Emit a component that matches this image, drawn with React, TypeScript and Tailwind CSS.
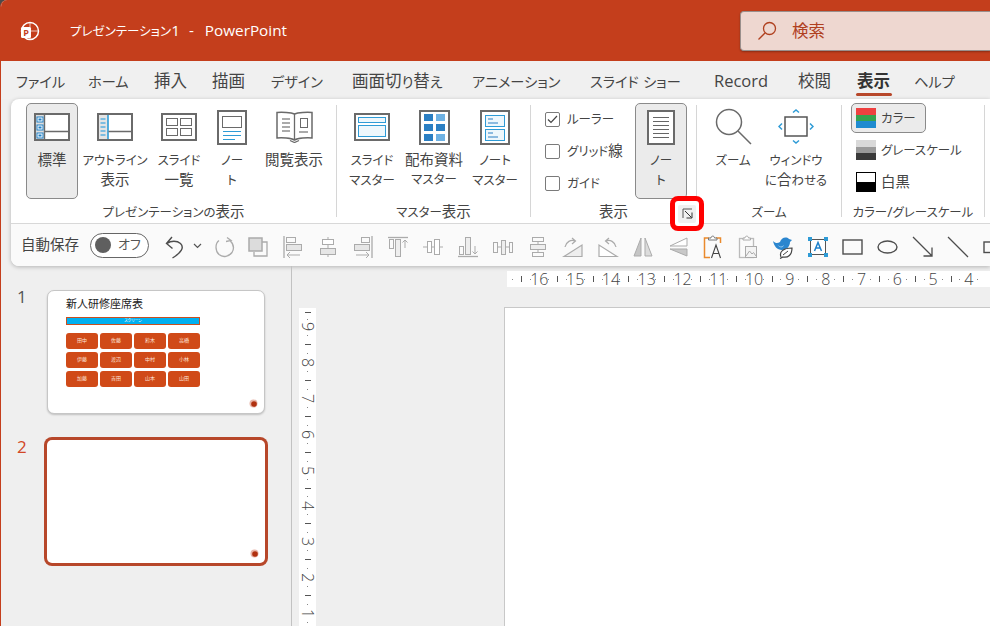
import React from "react";

const G = "#ababab";
const D = "#6a6a6a";
const B = "#2e9bd6";

function T({ s }: { s: string }) {
  const parts = s.split(/([\u3040-\u30FF]+)/);
  return (
    <>
      {parts.map((p, i) =>
        i % 2 === 1 ? (
          <span key={i} className="text-[0.86em]">{p}</span>
        ) : (
          <React.Fragment key={i}>{p}</React.Fragment>
        )
      )}
    </>
  );
}

function S({ w, h, children }: { w: number; h: number; children: React.ReactNode }) {
  return (
    <svg width={w} height={h} viewBox={`0 0 ${w} ${h}`} fill="none" className="block shrink-0">
      {children}
    </svg>
  );
}

const IconNormal = () => (
  <S w={36} h={28}>
    <rect x="1" y="1" width="34" height="26" fill="#fff" stroke={D} strokeWidth="2" />
    <rect x="2" y="2" width="8" height="24" fill="#dedede" />
    <path d="M10.5 1v26M10.5 18.5H35" stroke={D} strokeWidth="1.4" />
    {[4, 12, 20].map((y) => (
      <g key={y}>
        <rect x="3" y={y} width="6" height="5" fill="#fff" stroke="#1f7fc4" />
        <rect x="4.5" y={y + 1.5} width="3" height="2" fill="#1f7fc4" />
      </g>
    ))}
  </S>
);
const IconOutline = () => (
  <S w={36} h={28}>
    <rect x="1" y="1" width="34" height="26" fill="#fff" stroke={D} strokeWidth="2" />
    <rect x="2" y="2" width="9" height="24" fill="#e4e4e4" />
    <path d="M11 2v24" stroke={B} strokeWidth="1.6" />
    <path d="M11.5 18.5H35" stroke={D} strokeWidth="1.3" />
    <path d="M3.5 6h5M3.5 10h5M3.5 14h5M3.5 18h5M3.5 22h5" stroke="#5aaede" strokeWidth="1.3" />
  </S>
);
const IconSorter = () => (
  <S w={36} h={28}>
    <rect x="1" y="1" width="34" height="26" fill="#fff" stroke={D} strokeWidth="2" />
    <rect x="5.5" y="5.5" width="11" height="7" stroke={D} />
    <rect x="19.5" y="5.5" width="11" height="7" stroke={D} />
    <rect x="5.5" y="15.5" width="11" height="7" stroke={D} />
    <rect x="19.5" y="15.5" width="11" height="7" stroke={D} />
  </S>
);
const IconNotes = () => (
  <S w={30} h={35}>
    <rect x="1" y="1" width="28" height="33" fill="#fff" stroke={D} strokeWidth="2" />
    <rect x="5.5" y="6.5" width="19" height="11" stroke={D} />
    <path d="M6 21.5h18M6 25.5h18M6 29.5h12" stroke={B} strokeWidth="1.2" />
  </S>
);
const IconRead = () => (
  <S w={37} h={32}>
    <path d="M18.5 3C15 1.5 6 1 1 1.5V27c5-.5 14 0 17.5 2C22 27 31 26.5 36 27V1.5C31 1 22 1.500 18.500 3Z" fill="#fff" stroke={D} strokeWidth="1.5" />
    <path d="M18.5 3v26M14 29.500l4.500 2 4.500-2" stroke={D} strokeWidth="1.3" />
    <path d="M6 8h8M6 12h8M6 16h8M6 20h8M23 21h9" stroke="#8e8e8e" strokeWidth="1.3" />
    <rect x="24.500" y="7.500" width="7" height="9" stroke={D} />
  </S>
);
const IconSlideMaster = () => (
  <S w={36} h={28}>
    <rect x="1" y="1" width="34" height="26" fill="#fff" stroke={D} strokeWidth="2" />
    <rect x="4.500" y="4.500" width="27" height="5" fill="#eef7fc" stroke={B} />
    <rect x="4.500" y="12.500" width="27" height="11" fill="#eef7fc" stroke={B} />
  </S>
);
const IconHandout = () => (
  <S w={31} h={35}>
    <rect x="1" y="1" width="29" height="33" fill="#fff" stroke={D} strokeWidth="2" />
    {[4, 14, 24].map((y) => (
      <g key={y}>
        <rect x="5" y={y} width="9" height="7" fill="#2b7fc3" />
        <rect x="17" y={y} width="9" height="7" fill={y === 14 ? "#2b7fc3" : "#6eb2e4"} />
      </g>
    ))}
  </S>
);
const IconNotesMaster = () => (
  <S w={30} h={35}>
    <rect x="1" y="1" width="28" height="33" fill="#fff" stroke={D} strokeWidth="2" />
    <rect x="5.500" y="5.500" width="19" height="11" fill="#eef7fc" stroke={B} />
    <rect x="5.500" y="19.500" width="19" height="11" fill="#eef7fc" stroke={B} />
    <path d="M8 9h5M8 13h10M8 23h5M8 27h10" stroke="#2b7fc3" strokeWidth="1" />
  </S>
);
const IconNote = () => (
  <S w={28} h={35}>
    <rect x="1" y="1" width="26" height="33" fill="#fff" stroke={D} strokeWidth="2" />
    <path d="M6 7.500h16M6 11.500h16M6 15.500h16M6 19.500h16M6 23.500h16M6 27.500h16" stroke="#666" strokeWidth="1" />
  </S>
);
const IconZoom = () => (
  <S w={38} h={38}>
    <circle cx="15" cy="14" r="12.500" fill="#fff" stroke={D} strokeWidth="1.500" />
    <path d="M24 23l13 13" stroke={D} strokeWidth="1.500" />
  </S>
);
const IconFit = () => (
  <S w={36} h={36}>
    <rect x="7" y="8" width="22" height="19" fill="#fff" stroke="#555" strokeWidth="1.500" />
    <path d="M15 3.500l3-2.500 3 2.500M15 31.500l3 2.500 3-2.500M4 14.500l-3 3 3 3M32 14.500l3 3-3 3" stroke={B} strokeWidth="1.500" />
  </S>
);
const Swatch = ({ c }: { c: string[] }) => (
  <div className="flex flex-col w-[20px] h-[20px] shrink-0">
    {c.map((x, i) => (
      <div key={i} className="flex-1" style={{ background: x }} />
    ))}
  </div>
);

const I = {
  back: (
    <S w={22} h={22}>
      <path d="M15 6h5v14H7v-4" stroke={G} strokeWidth="1.300" />
      <rect x="2" y="2" width="13" height="13" fill="#dcdcdc" stroke={G} strokeWidth="1.500" />
    </S>
  ),
  alignL: (
    <S w={22} h={24}>
      <path d="M2 1v22" stroke={G} strokeWidth="1.300" />
      <rect x="4.500" y="2.500" width="9" height="5" stroke={G} />
      <rect x="4.500" y="9.500" width="15" height="6" fill="#e6e6e6" stroke={G} />
      <path d="M18 20H5m3-3l-3 3 3 3" stroke={G} />
    </S>
  ),
  alignC: (
    <S w={18} h={20}>
      <path d="M9 0v20" stroke={G} />
      <rect x="3.500" y="2.500" width="11" height="5" fill="#fff" stroke={G} />
      <rect x="1.500" y="11.500" width="15" height="6" fill="#e6e6e6" stroke={G} />
    </S>
  ),
  alignR: (
    <S w={22} h={24}>
      <path d="M20 1v22" stroke={G} strokeWidth="1.300" />
      <rect x="9.500" y="2.500" width="8" height="5" stroke={G} />
      <rect x="2.500" y="9.500" width="15" height="6" fill="#e6e6e6" stroke={G} />
      <path d="M4 20h13m-3-3l3 3-3 3" stroke={G} />
    </S>
  ),
  alignT: (
    <S w={22} h={22}>
      <path d="M1 1.500h20" stroke={G} strokeWidth="1.300" />
      <rect x="2.500" y="3.500" width="4" height="9" stroke={G} />
      <rect x="8.500" y="3.500" width="5" height="17" fill="#eee" stroke={G} />
      <path d="M18 12V4m-2.500 2.500L18 4l2.500 2.500" stroke={G} />
    </S>
  ),
  alignM: (
    <S w={20} h={18}>
      <path d="M0 9h20" stroke={G} />
      <rect x="4.500" y="3.500" width="4" height="11" fill="#fff" stroke={G} />
      <rect x="11.500" y="1.500" width="5" height="15" fill="#fff" stroke={G} />
    </S>
  ),
  alignB: (
    <S w={22} h={22}>
      <path d="M1 20.500h20" stroke={G} strokeWidth="1.300" />
      <rect x="2.500" y="10.500" width="4" height="8" stroke={G} />
      <rect x="8.500" y="1.500" width="5" height="17" fill="#eee" stroke={G} />
      <path d="M18 10v8m-2.500-2.500L18 18l2.500-2.500" stroke={G} />
    </S>
  ),
  distH: (
    <S w={22} h={16}>
      <rect x="1.500" y="3.500" width="4" height="10" stroke={G} />
      <rect x="9.500" y="1.500" width="4" height="14" fill="#eee" stroke={G} />
      <rect x="17.500" y="3.500" width="3" height="10" stroke={G} />
      <path d="M6 8h3M14 8h3" stroke={G} />
    </S>
  ),
  distV: (
    <S w={18} h={22}>
      <rect x="3.500" y="1.500" width="11" height="4" stroke={G} />
      <rect x="1.500" y="8.500" width="15" height="5" fill="#eee" stroke={G} />
      <rect x="3.500" y="16.500" width="11" height="4" stroke={G} />
      <path d="M9 6v2M9 14v2" stroke={G} />
    </S>
  ),
  rotR: (
    <S w={22} h={22}>
      <path d="M2 20.500h18V9L2 20.500Z" fill="#eee" stroke={G} strokeWidth="1.200" />
      <path d="M3 11c1-5 6-8 10-6m-3-3l3.500 3-3.500 3" stroke={G} strokeWidth="1.200" />
    </S>
  ),
  rotL: (
    <S w={22} h={22}>
      <path d="M2 20.500h18L2 9v11.500Z" fill="#fff" stroke={G} strokeWidth="1.200" />
      <path d="M19 11c-1-5-6-8-10-6m3-3L8.500 5 12 8" stroke={G} strokeWidth="1.200" />
    </S>
  ),
  flipH: (
    <S w={20} h={20}>
      <path d="M8 1v18H1L8 1Z" fill="#c5c5c5" stroke={G} />
      <path d="M12 1v18h7L12 1Z" fill="#dcdcdc" stroke={G} />
    </S>
  ),
  flipV: (
    <S w={20} h={20}>
      <path d="M19 1v8H2l17-8Z" fill="#fff" stroke={G} />
      <path d="M19 19v-7H2l17 7Z" fill="#c8c8c8" stroke={G} />
    </S>
  ),
  clipA: (
    <S w={20} h={24}>
      <path d="M6 3H1.500v19.500H7" stroke="#ea8a2d" strokeWidth="1.500" />
      <path d="M13 3h4.500v5" stroke="#ea8a2d" strokeWidth="1.500" />
      <path d="M5.500 5V3h2.500c0-2.500 3.500-2.500 3.500 0h2.500v2h-8.500Z" fill="#fff" stroke="#777" />
      <path d="M8.500 23l4.500-13 4.500 13M10 18.500h6" stroke="#444" strokeWidth="1.100" />
    </S>
  ),
  clipImg: (
    <S w={20} h={24}>
      <rect x="1.500" y="3.500" width="14" height="19" stroke="#bbb" strokeWidth="1.300" />
      <path d="M5 5V3h2c0-2.500 3.500-2.500 3.500 0h2v2H5Z" fill="#fff" stroke="#aaa" />
      <rect x="7.500" y="11.500" width="11" height="11" fill="#f3f3f3" stroke="#aaa" />
      <path d="M8 21l3.500-5 2.500 3 1.500-1.500 2.500 3.500" stroke="#aaa" />
    </S>
  ),
  bird: (
    <S w={22} h={24}>
      <path d="M1 6c3 3 5 2 7 1 1-4 6-6 9-3l3 1-2 2c0 5-4 8-8 8-5 0-8-4-9-9Z" fill="#2b86cf" />
      <path d="M5 9c2 3 5 3 7 1-1 3-4 4-7-1Z" fill="#8ec6ef" />
      <path d="M9 22c-2-5 2-9 11-9 0 7-4 10-9 9l-3 1.500" fill="#fff" stroke="#444" strokeWidth="1.200" />
      <path d="M11 20l5-4" stroke="#444" />
    </S>
  ),
  textbox: (
    <S w={20} h={20}>
      <rect x="2.500" y="2.500" width="15" height="15" fill="#fff" stroke="#555" strokeWidth="1" />
      {[[0, 0], [16, 0], [0, 16], [16, 16]].map(([x, y], i) => (
        <rect key={i} x={x} y={y} width="4" height="4" fill={B} />
      ))}
      <path d="M6.500 14L10 5.500 13.500 14M7.800 11h4.400" stroke="#1f82cc" strokeWidth="1.500" />
    </S>
  ),
  rect: (
    <S w={21} h={16}>
      <rect x="1" y="1" width="19" height="14" stroke="#4d4d4d" strokeWidth="1.400" />
    </S>
  ),
  oval: (
    <S w={21} h={14}>
      <ellipse cx="10.500" cy="7" rx="9.500" ry="6" stroke="#4d4d4d" strokeWidth="1.400" />
    </S>
  ),
  arrow: (
    <S w={22} h={22}>
      <path d="M1 1l19 19M20 11.500V20h-8.500" stroke="#4d4d4d" strokeWidth="1.300" />
    </S>
  ),
  line: (
    <S w={22} h={22}>
      <path d="M1 1l20 20" stroke="#4d4d4d" strokeWidth="1.300" />
    </S>
  ),
  cut: (
    <S w={20} h={14}>
      <rect x="1" y="2" width="18" height="10.500" stroke="#4d4d4d" strokeWidth="1.400" />
    </S>
  ),
};

const qat = [
  I.back, I.alignL, I.alignC, I.alignR, I.alignT, I.alignM, I.alignB, I.distH, I.distV, I.rotR, I.rotL,
  I.flipH, I.flipV, I.clipA, I.clipImg, I.bird, I.textbox, I.rect, I.oval, I.arrow, I.line, I.cut,
];

const tabs: [string, string][] = [
  ["ファイル", "w-[72px]"], ["ホーム", "w-[66px]"], ["挿入", "w-[58px]"], ["描画", "w-[59px]"],
  ["デザイン", "w-[81px]"], ["画面切り替え", "w-[120px]"], ["アニメーション", "w-[118px]"],
  ["スライド ショー", "w-[124px]"], ["Record", "w-[84px]"], ["校閲", "w-[58px]"],
];

function Big({ icon, l1, l2, w, active }: { icon: React.ReactNode; l1: string; l2?: string; w: string; active?: boolean }) {
  return (
    <div className={`${w} h-[96px] shrink-0 flex flex-col items-center rounded-[5px] border ${active ? "border-[#8a8a8a] bg-[#ebebeb]" : "border-transparent"}`}>
      <div className="h-[46px] flex items-center justify-center shrink-0">{icon}</div>
      <div className="text-center leading-[19px] whitespace-nowrap"><T s={l1} /></div>
      {l2 && <div className="text-center leading-[19px] whitespace-nowrap"><T s={l2} /></div>}
    </div>
  );
}

function Group({ w, label, children, pl }: { w: string; label: string; children: React.ReactNode; pl: string }) {
  return (
    <div className={`${w} shrink-0 flex flex-col pt-[4px]`}>
      <div className={`${pl} flex h-[96px]`}>{children}</div>
      <div className="mt-[4px] text-center leading-[18px] whitespace-nowrap"><T s={label} /></div>
    </div>
  );
}

const Sep = () => <div className="w-px shrink-0 bg-[#d6d6d6] my-[6px]" />;

function Check({ label, on }: { label: string; on?: boolean }) {
  return (
    <div className="h-[32px] flex items-center gap-[7px] whitespace-nowrap">
      <div className="w-[15px] h-[15px] rounded-[2px] border border-[#7a7a7a] bg-white flex items-center justify-center">
        {on && (
          <svg width="11" height="9" viewBox="0 0 11 9" fill="none">
            <path d="M1 4.500l3 3 6-6.500" stroke="#444" strokeWidth="1.200" />
          </svg>
        )}
      </div>
      <span><T s={label} /></span>
    </div>
  );
}

const Dot = () => <span className="w-0 flex justify-center"><span className="w-px h-px shrink-0 bg-[#888]" /></span>;
const TickH = () => <span className="w-0 flex justify-center"><span className="w-px h-[6px] shrink-0 bg-[#555]" /></span>;
const Num = ({ n }: { n: number }) => <span className="w-[20px] -mx-[10px] text-center leading-none">{n}</span>;

const DotV = () => <span className="h-0 flex items-center justify-center"><span className="w-px h-px shrink-0 bg-[#888]" /></span>;
const TickV = () => <span className="h-0 flex items-center justify-center"><span className="h-px w-[6px] shrink-0 bg-[#555]" /></span>;
const NumV = ({ n }: { n: number }) => (
  <span className="h-[20px] -my-[10px] flex items-center justify-center">
    <span className="[writing-mode:vertical-rl] leading-none">{n}</span>
  </span>
);

const rows = [
  ["田中", "佐藤", "鈴木", "高橋"],
  ["伊藤", "渡辺", "中村", "小林"],
  ["加藤", "吉田", "山本", "山田"],
];

const Badge = () => (
  <svg width="9" height="9" viewBox="0 0 9 9" className="absolute right-[6px] bottom-[5px]">
    <circle cx="4.500" cy="4.500" r="4" fill="#e8b5a8" />
    <circle cx="5" cy="5" r="2.800" fill="#b0300f" />
  </svg>
);

export default function App() {
  return (
    <div className="w-[990px] h-[626px] bg-[#4a4a4a] overflow-hidden">
      <div className="relative w-full h-full rounded-tl-[7px] overflow-hidden bg-[#efefef] border-l border-[#c43e1c] flex flex-col text-[#444] text-[14.500px] font-['Open_Sans','Noto_Sans_CJK_JP',sans-serif] [font-feature-settings:'palt']">
        {/* title bar */}
        <div className="h-[61px] shrink-0 bg-[#c43e1c] flex text-white">
          <div className="flex-1 flex items-center h-[61px]">
            <div className="ml-[19px] mr-[30px] mt-[1px]">
              <svg width="20" height="20" viewBox="0 0 20 20" fill="none">
                <circle cx="10" cy="10" r="8.500" stroke="#fff" strokeWidth="1.500" />
                <path d="M10 2v16M10 10h8" stroke="#fff" strokeWidth="1" opacity="0.700" />
                <rect x="1" y="6" width="10" height="11" rx="1.500" fill="#fff" />
                <text x="3.200" y="15" fontSize="9" fontWeight="700" fill="#c43e1c" fontFamily="Open Sans">P</text>
              </svg>
            </div>
            <span className="text-[15.300px] whitespace-nowrap">
              <span className="text-[12.500px]">プレゼンテーション</span>1
              <span className="ml-[9px] mr-[11px]">-</span>PowerPoint
            </span>
          </div>
          <div className="w-[250px] h-[40px] mt-[11px] shrink-0 bg-[#eed7d0] border border-r-0 border-[#9a8f8c] rounded-l-[4px] flex items-center text-[#b0401f] text-[16.500px] shadow-[0_1px_2px_rgba(0,0,0,0.3)]">
            <svg width="20" height="20" viewBox="0 0 20 20" fill="none" className="ml-[16px] mr-[15px]">
              <circle cx="12.500" cy="7.500" r="6" stroke="#b0401f" strokeWidth="1.300" />
              <path d="M8 12L1.500 18.500" stroke="#b0401f" strokeWidth="1.300" />
            </svg>
            検索
          </div>
        </div>

        {/* tabs */}
        <div className="h-[38px] shrink-0 pl-[15px] flex items-start pt-[8px] text-[16.500px] bg-[#f0f0f0] whitespace-nowrap">
          {tabs.map(([t, w]) => (
            <div key={t} className={`${w} shrink-0 leading-[24px]`}><T s={t} /></div>
          ))}
          <div className="w-[58px] shrink-0 leading-[24px]">
            <div className="pl-[1px] font-bold text-[#333]">表示</div>
            <div className="w-[36px] h-[3px] rounded-full bg-[#b7472a]" />
          </div>
          <div className="shrink-0 leading-[24px]"><T s="ヘルプ" /></div>
        </div>

        {/* ribbon card */}
        <div className="ml-[10px] h-[167px] shrink-0 rounded-l-[8px] bg-white shadow-[0_1px_4px_rgba(0,0,0,0.25)] flex flex-col">
          <div className="relative h-[124px] shrink-0 flex">
            <Group w="w-[325px]" label="プレゼンテーションの表示" pl="pl-[15px]">
              <Big w="w-[52px]" active icon={<IconNormal />} l1="標準" />
              <div className="w-[4px]" />
              <Big w="w-[66px]" icon={<IconOutline />} l1="アウトライン" l2="表示" />
              <Big w="w-[62px]" icon={<IconSorter />} l1="スライド" l2="一覧" />
              <Big w="w-[44px]" icon={<IconNotes />} l1="ノー" l2="ト" />
              <Big w="w-[80px]" icon={<IconRead />} l1="閲覧表示" />
            </Group>
            <Sep />
            <Group w="w-[193px]" label="マスター表示" pl="pl-[4px]">
              <Big w="w-[62px]" icon={<IconSlideMaster />} l1="スライド" l2="マスター" />
              <Big w="w-[62px]" icon={<IconHandout />} l1="配布資料" l2="マスター" />
              <Big w="w-[60px]" icon={<IconNotesMaster />} l1="ノート" l2="マスター" />
            </Group>
            <Sep />
            <Group w="w-[165px]" label="表示" pl="pl-[14px]">
              <div className="w-[90px] shrink-0">
                <Check on label="ルーラー" />
                <Check label="グリッド線" />
                <Check label="ガイド" />
              </div>
              <Big w="w-[52px]" active icon={<IconNote />} l1="ノー" l2="ト" />
            </Group>
            <Sep />
            <Group w="w-[144px]" label="ズーム" pl="pl-[8px]">
              <Big w="w-[56px]" icon={<IconZoom />} l1="ズーム" />
              <Big w="w-[70px]" icon={<IconFit />} l1="ウィンドウ" l2="に合わせる" />
            </Group>
            <Sep />
            <Group w="w-[142px]" label="カラー/グレースケール" pl="pl-[9px]">
              <div className="flex flex-col">
                <div className="w-[75px] h-[30px] rounded-[5px] border border-[#8a8a8a] bg-[#ebebeb] flex items-center pl-[4px] gap-[5px]">
                  <Swatch c={["#ee4040", "#35a24f", "#1f8bd0"]} />
                  <span><T s="カラー" /></span>
                </div>
                <div className="h-[32px] mt-[1px] flex items-center pl-[5px] gap-[5px] whitespace-nowrap">
                  <Swatch c={["#d9d9d9", "#9a9a9a", "#3a3a3a"]} />
                  <span><T s="グレースケール" /></span>
                </div>
                <div className="h-[32px] flex items-center pl-[5px] gap-[5px]">
                  <div className="w-[20px] h-[20px] border border-black flex flex-col">
                    <div className="flex-1 bg-white" />
                    <div className="flex-1 bg-black" />
                  </div>
                  <span>白黒</span>
                </div>
              </div>
            </Group>
            <Sep />
            {/* highlighted dialog launcher */}
            <div className="absolute left-[659px] top-[97px] w-[34px] h-[35px] rounded-[8px] border-[5px] border-[#ff0000] bg-white flex items-center justify-center z-10">
              <div className="w-[18px] h-[18px] rounded-[2px] bg-[#f0f0f0] flex items-center justify-center">
                <svg width="11" height="11" viewBox="0 0 11 11" fill="none">
                  <path d="M10 1H1v9" stroke="#555" />
                  <path d="M3 3l6.500 6.500M10 4.500V10H4.500" stroke="#333" />
                </svg>
              </div>
            </div>
          </div>
          <div className="flex-1 border-t border-[#d8d8d8] bg-[#fafafa] rounded-bl-[8px] flex items-center pl-[10px] whitespace-nowrap">
            <span className="w-[69px] shrink-0">自動保存</span>
            <div className="w-[59px] h-[25px] shrink-0 rounded-full border border-[#666] bg-white flex items-center pl-[4px] text-[13px] text-[#555]">
              <div className="w-[16px] h-[16px] rounded-full bg-[#5f5f5f] mr-[7px]" />
              オフ
            </div>
            <div className="ml-[16px] shrink-0 pt-[3px]">
              <svg width="20" height="24" viewBox="0 0 20 24" fill="none">
                <path d="M7 2L1.500 8.500l6 5M2 8.500c4-3 10-3 13.500 0 4 4 1 9-8 14.500" stroke="#4d4d4d" strokeWidth="1.400" />
              </svg>
            </div>
            <div className="ml-[8px] mr-[12px] shrink-0 pt-[2px]">
              <svg width="9" height="6" viewBox="0 0 9 6" fill="none">
                <path d="M1 1l3.500 3.500L8 1" stroke="#555" strokeWidth="1.200" />
              </svg>
            </div>
            <div className="shrink-0 pt-[3px]">
              <svg width="21" height="22" viewBox="0 0 21 22" fill="none">
                <path d="M13 1.500l4 3-5 1M5 4.500c-4 3-4 10 0 14 4 3.500 10 2 13-2 3-5 1-9-2-12" stroke={G} strokeWidth="1.300" />
              </svg>
            </div>
            <div className="w-[5px] shrink-0" />
            {qat.map((ic, i) => (
              <div key={i} className="w-[35px] shrink-0 pt-[3px] flex items-center justify-center">{ic}</div>
            ))}
          </div>
        </div>

        {/* body */}
        <div className="flex-1 min-h-0 flex">
          <div className="w-[291px] shrink-0 border-r border-[#c2c2c2] pt-[24px] flex flex-col">
            <div className="flex">
              <div className="w-[46px] shrink-0 pl-[16px] text-[17px] leading-[14px] text-[#555]">1</div>
              <div className="relative w-[218px] h-[124px] rounded-[7px] border border-[#c6c6c6] bg-white shadow-[0_1px_2px_rgba(0,0,0,0.2)] pl-[18px] text-black">
                <div className="text-[11px] leading-[14px] mt-[6px] text-[#222] whitespace-nowrap">新人研修座席表</div>
                <div className="w-[134px] h-[8px] mt-[6px] bg-[#00b0f0] border border-[#c8501f] text-white text-[4px] leading-[5px] text-center">スクリーン</div>
                <div className="mt-[8px] w-[134px] grid grid-cols-4 gap-x-[2px] gap-y-[3px]">
                  {rows.flat().map((n) => (
                    <div key={n} className="h-[16px] rounded-[3px] bg-[#d04a18] text-[#fde3d8] text-[5px] flex items-center justify-center">{n}</div>
                  ))}
                </div>
                <Badge />
              </div>
            </div>
            <div className="flex mt-[26px]">
              <div className="w-[46px] shrink-0 pl-[16px] text-[17px] leading-[14px] text-[#d24726]">2</div>
              <div className="relative w-[218px] h-[123px] rounded-[5px] bg-white ring-[3px] ring-[#b7472a]">
                <Badge />
              </div>
            </div>
          </div>
          <div className="flex-1 min-w-0 flex flex-col">
            <div className="mt-[5px] ml-[215px] h-[16px] shrink-0 bg-white flex items-center text-[16px] font-light text-[#444]">
              <div className="w-[10px] shrink-0 flex justify-center"><Dot /></div>
              {[16, 15, 14, 13, 12, 11, 10, 9, 8, 7, 6, 5, 4].map((n) => (
                <div key={n} className="w-[35.800px] shrink-0 flex justify-around items-center">
                  <TickH />
                  <Dot />
                  <Num n={n} />
                  <Dot />
                </div>
              ))}
            </div>
            <div className="flex-1 min-h-0 flex mt-[20px]">
              <div className="ml-[7px] mt-[1px] w-[17px] shrink-0 bg-white flex flex-col items-center text-[16px] font-light text-[#444]">
                <div className="h-[14.500px] shrink-0 flex flex-col justify-around pt-[1px]">
                  <TickV />
                  <DotV />
                </div>
                {[9, 8, 7, 6, 5, 4, 3, 2, 1].map((n) => (
                  <div key={n} className="h-[35.800px] shrink-0 flex flex-col justify-around items-center">
                    <NumV n={n} />
                    <DotV />
                    <TickV />
                    <DotV />
                  </div>
                ))}
              </div>
              <div className="ml-[188px] flex-1 bg-white border-l border-t border-[#c8c8c8]" />
            </div>
          </div>
        </div>
      </div>
    </div>
  );
}
